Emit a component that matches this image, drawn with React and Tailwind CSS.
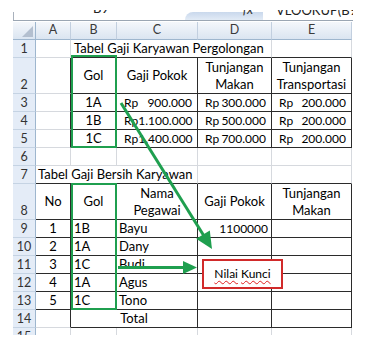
import React from "react";

function inT(r, c) {
  return (
    (r >= 2 && r <= 5 && c >= 2 && c <= 5) ||
    (r >= 8 && r <= 13 && c >= 1 && c <= 5) ||
    (r === 14 && c >= 2 && c <= 5)
  );
}

function Cell({ r, c, span = 1, cls = "", children }) {
  const last = c + span - 1;
  const rb = inT(r, last) || inT(r, last + 1);
  let bb = false;
  for (let k = c; k <= last; k++) if (inT(r, k) || inT(r + 1, k)) bb = true;
  const spanCls = span === 3 ? "col-span-3" : span === 2 ? "col-span-2" : "";
  return (
    <div
      className={`border-r border-b ${rb ? "border-r-[#2b2b2b]" : "border-r-[#d6d9de]"} ${
        bb ? "border-b-[#2b2b2b]" : "border-b-[#d6d9de]"
      } ${spanCls} flex min-w-0 overflow-hidden text-black ${cls}`}
    >
      {children}
    </div>
  );
}

function Acc({ n }) {
  return (
    <div className="flex w-full items-center justify-between pl-[7px] pr-[5px] text-[12px] whitespace-nowrap">
      <span>Rp</span>
      <span>{n}</span>
    </div>
  );
}

const two = "flex-col items-center justify-center leading-[17px]";

const rows = {
  1: [{ c: 1 }, { c: 2, span: 3, t: "Tabel Gaji Karyawan Pergolongan", cls: "items-center pl-[3px] whitespace-nowrap" }, { c: 5 }],
  2: [
    { c: 1 },
    { c: 2, t: "Gol", cls: "items-center justify-center" },
    { c: 3, t: "Gaji Pokok", cls: "items-center justify-center" },
    { c: 4, t: ["Tunjangan", "Makan"], cls: two },
    { c: 5, t: ["Tunjangan", "Transportasi"], cls: two },
  ],
  3: [{ c: 1 }, { c: 2, t: "1A", cls: "items-center justify-center" }, { c: 3, acc: "900.000" }, { c: 4, acc: "300.000" }, { c: 5, acc: "200.000" }],
  4: [{ c: 1 }, { c: 2, t: "1B", cls: "items-center justify-center" }, { c: 3, acc: "1.100.000" }, { c: 4, acc: "500.000" }, { c: 5, acc: "200.000" }],
  5: [{ c: 1 }, { c: 2, t: "1C", cls: "items-center justify-center" }, { c: 3, acc: "1.400.000" }, { c: 4, acc: "700.000" }, { c: 5, acc: "200.000" }],
  6: [{ c: 1 }, { c: 2 }, { c: 3 }, { c: 4 }, { c: 5 }],
  7: [{ c: 1, span: 3, t: "Tabel Gaji Bersih Karyawan", cls: "items-center pl-[2px] whitespace-nowrap" }, { c: 4 }, { c: 5 }],
  8: [
    { c: 1, t: "No", cls: "items-center justify-center" },
    { c: 2, t: "Gol", cls: "items-center justify-center" },
    { c: 3, t: ["Nama", "Pegawai"], cls: two },
    { c: 4, t: "Gaji Pokok", cls: "items-center justify-center" },
    { c: 5, t: ["Tunjangan", "Makan"], cls: two },
  ],
  9: [
    { c: 1, t: "1", cls: "items-center justify-center" },
    { c: 2, t: "1B", cls: "items-center pl-[3px]" },
    { c: 3, t: "Bayu", cls: "items-center pl-[2px]" },
    { c: 4, t: "1100000", cls: "items-center justify-end pr-[3px] text-[12px]" },
    { c: 5 },
  ],
  10: [{ c: 1, t: "2", cls: "items-center justify-center" }, { c: 2, t: "1A", cls: "items-center pl-[3px]" }, { c: 3, t: "Dany", cls: "items-center pl-[2px]" }, { c: 4 }, { c: 5 }],
  11: [{ c: 1, t: "3", cls: "items-center justify-center" }, { c: 2, t: "1C", cls: "items-center pl-[3px]" }, { c: 3, t: "Budi", cls: "items-center pl-[2px]" }, { c: 4 }, { c: 5 }],
  12: [{ c: 1, t: "4", cls: "items-center justify-center" }, { c: 2, t: "1A", cls: "items-center pl-[3px]" }, { c: 3, t: "Agus", cls: "items-center pl-[2px]" }, { c: 4 }, { c: 5 }],
  13: [{ c: 1, t: "5", cls: "items-center justify-center" }, { c: 2, t: "1C", cls: "items-center pl-[3px]" }, { c: 3, t: "Tono", cls: "items-center pl-[2px]" }, { c: 4 }, { c: 5 }],
  14: [{ c: 1 }, { c: 2, span: 2, t: "Total", cls: "items-center justify-center" }, { c: 4 }, { c: 5 }],
  15: [{ c: 1 }, { c: 2 }, { c: 3 }, { c: 4 }, { c: 5 }],
};

export default function App() {
  const rowNums = Array.from({ length: 15 }, (_, i) => i + 1);
  return (
    <div className="relative w-[372px] h-[344px] overflow-hidden bg-white font-['Lato',sans-serif] text-[13px]">
      {/* formula bar (only its lower edge shows) */}
      <div className="h-[10px]" />
      <div className="ml-[13px] flex h-[11px] w-[340px] items-start overflow-hidden border-b border-[#9ba6b3] text-[13px] leading-none text-[#222]">
        <div className="flex w-[172px] shrink-0 flex-col">
          <div className="flex h-[2px] justify-center pl-[4px]">
            <span className="-mt-[8px] whitespace-nowrap">B9</span>
          </div>
          <div className="h-[8px] border-l border-[#a9b1bc]" />
        </div>
        <div className="mt-[2px] flex h-[8px] w-[78px] shrink-0 justify-end rounded-tl-[9px] bg-gradient-to-b from-[#c9d8ec] to-[#e2ebf6] pr-[10px]">
          <span className="-mt-[9px] italic text-[#333]">fx</span>
        </div>
        <div className="pl-[13px] whitespace-nowrap">
          <span className="-mt-[6px] block">VLOOKUP(B9,J</span>
        </div>
      </div>
      <div className="h-[1px]" />
      {/* sheet */}
      <div className="ml-[13px] h-[313px] w-[339px] overflow-hidden">
        <div className="grid grid-cols-[23px_35px_46px_81px_74px_80px] grid-rows-[18px_18px_36px_18px_18px_18px_18px_18px_36px_18px_18px_18px_18px_18px_18px_18px]">
          <div className="relative border-r border-b border-r-[#9eb6ce] border-b-[#9eb6ce] bg-gradient-to-b from-[#f4f7fb] to-[#dbe5f1]">
            <svg className="absolute right-[2px] bottom-[2px]" width="11" height="11" viewBox="0 0 11 11">
              <polygon points="11,0 11,11 0,11" fill="#b3bfcf" />
            </svg>
          </div>
          {["A", "B", "C", "D", "E"].map((l) => (
            <div
              key={l}
              className="flex items-center justify-center border-r border-b border-r-[#c2cfdf] border-b-[#9eb6ce] bg-gradient-to-b from-[#f4f7fb] to-[#dbe5f1] text-[12.5px] text-[#3a3a3a]"
            >
              {l}
            </div>
          ))}
          {rowNums.map((r) => (
            <React.Fragment key={r}>
              <div className="flex items-end justify-center border-r border-b border-r-[#9eb6ce] border-b-[#c5d3e3] bg-[#e4ecf7] pb-[1px] text-[12.5px] leading-[15px] text-[#333]">
                {r}
              </div>
              {rows[r].map((cell) => (
                <Cell key={cell.c} r={r} c={cell.c} span={cell.span} cls={cell.cls || ""}>
                  {cell.acc ? (
                    <Acc n={cell.acc} />
                  ) : Array.isArray(cell.t) ? (
                    cell.t.map((s) => <span key={s}>{s}</span>)
                  ) : cell.t ? (
                    <span>{cell.t}</span>
                  ) : null}
                </Cell>
              ))}
            </React.Fragment>
          ))}
        </div>
      </div>

      {/* green highlight boxes */}
      <div className="absolute left-[71px] top-[55px] h-[93px] w-[46px] border-2 border-[#1f9f4f]" />
      <div className="absolute left-[71px] top-[183px] h-[127px] w-[46px] border-2 border-[#1f9f4f]" />

      {/* arrows */}
      <svg className="pointer-events-none absolute left-0 top-0" width="372" height="344" viewBox="0 0 372 344">
        <line x1="121" y1="103" x2="204" y2="236" stroke="#1f9f4f" strokeWidth="3" />
        <polygon points="212,249 196.2,238.8 209.8,230.4" fill="#1f9f4f" />
        <line x1="118" y1="267.5" x2="184" y2="267.5" stroke="#1f9f4f" strokeWidth="3" />
        <polygon points="197,267.5 183,261 183,274" fill="#1f9f4f" />
      </svg>

      {/* red key box */}
      <div className="absolute left-[202px] top-[259px] flex h-[30px] w-[81px] items-center justify-center gap-[3px] border-2 border-[#d12a2a] bg-white text-[12px] text-black">
        <span className="underline decoration-wavy decoration-[#e02020] decoration-1 underline-offset-2">Nilai</span>
        <span className="underline decoration-wavy decoration-[#e02020] decoration-1 underline-offset-2">Kunci</span>
      </div>
    </div>
  );
}
